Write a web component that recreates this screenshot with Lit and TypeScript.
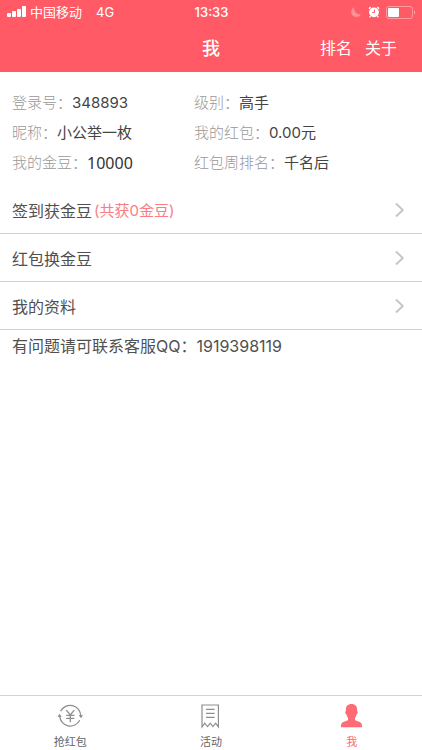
import { LitElement, html, svg, css } from "lit";
import { customElement, state } from "lit/decorators.js";

interface Field {
  label: string;
  value: string;
  large?: boolean;
}

const FIELDS: Field[] = [
  { label: "登录号", value: "348893" },
  { label: "级别", value: "高手" },
  { label: "昵称", value: "小公举一枚" },
  { label: "我的红包", value: "0.00元" },
  { label: "我的金豆", value: "10000", large: true },
  { label: "红包周排名", value: "千名后" },
];

const ROWS = [
  { text: "签到获金豆", note: "(共获0金豆)" },
  { text: "红包换金豆", note: "" },
  { text: "我的资料", note: "" },
];

const redPacketIcon = svg`
  <g fill="none" stroke="currentColor" stroke-width="1.3">
    <path d="M3.6 8.2A10.6 10.6 0 0 1 23.700 13M22.700 17.300A10.6 10.6 0 0 1 2.700 13" />
    <path d="M9.300 7.200l4 4.800 4-4.800M13.300 12v7.300M9.200 12.300h8.200M9.200 15.300h8.200" />
  </g>
  <path fill="currentColor" d="M21.700 12.300l4.200-.4-1.800 3.400zM.6 14.100l4.200-.4-2.400-3z" />`;

const activityIcon = svg`
  <g fill="none" stroke="currentColor" stroke-width="1.2">
    <path d="M5 23.900V2h16.400v21.900l-2.800-3.700-2.700 3.400-2.700-3.400-2.700 3.400-2.700-3.400z" />
    <path d="M9 6.300h8.600M9 10.300h8.600M9 14.300h8.600" />
  </g>`;

const meIcon = svg`
  <path fill="currentColor" d="M13.500 1c3.700 0 5.600 2.200 5.600 5.600v1.700c.6.1.7.8.5 1.700-.2.900-.5 1.400-1.100 1.600-.3 1.400-.8 2.500-1.500 3.300v1.800c.5 1 1.900 1.300 3.700 1.900 2.200.7 3.400 2 3.400 5.600H2.900c0-3.600 1.200-4.900 3.400-5.600 1.800-.6 3.200-.9 3.700-1.900v-1.800c-.7-.8-1.200-1.900-1.500-3.300-.6-.2-.9-.7-1.100-1.600-.2-.9-.1-1.600.5-1.700V6.600C7.900 3.200 9.800 1 13.500 1z" />`;

const TABS = [
  { id: "grab", text: "抢红包", icon: redPacketIcon },
  { id: "activity", text: "活动", icon: activityIcon },
  { id: "me", text: "我", icon: meIcon },
];

@customElement("status-bar")
export class StatusBar extends LitElement {
  static styles = css`
    :host {
      display: grid;
      grid-template-columns: 1fr auto 1fr;
      align-items: center;
      height: 24px;
      padding: 0 6px 0 7px;
      font-size: 13px;
      line-height: 24px;
    }
    .side {
      display: flex;
      align-items: center;
    }
    .signal {
      width: 19px;
      height: 12px;
      margin-right: 4px;
    }
    .network {
      margin-left: 14px;
    }
    .time {
      font-weight: 500;
    }
    .right {
      justify-content: flex-end;
      gap: 6px;
    }
    .moon,
    .alarm {
      width: 12px;
      height: 12px;
    }
    .battery {
      width: 30px;
      height: 13px;
    }
  `;

  render() {
    return html`
      <div class="side">
        <svg class="signal" viewBox="0 0 19 12" fill="#fff" aria-hidden="true">
          <rect x="0" y="7" width="4" height="4" rx="1" />
          <rect x="5" y="5" width="4" height="6" rx="1" />
          <rect x="10" y="3" width="4" height="8" rx="1" />
          <rect x="15" y="0" width="4" height="11" rx="1" />
        </svg>
        <span>中国移动</span>
        <span class="network">4G</span>
      </div>
      <span class="time">13:33</span>
      <div class="side right">
        <svg class="moon" viewBox="0 0 12 12" aria-hidden="true">
          <path fill="#ff9298" d="M4.500 1A5.200 5.200 0 1 0 11 8.200 5.600 5.600 0 0 1 4.500 1z" />
        </svg>
        <svg class="alarm" viewBox="0 0 12 12" aria-hidden="true">
          <circle cx="6" cy="6.300" r="4.900" fill="#fff" />
          <path d="M.9 2.800L2.700 1M11.100 2.800L9.300 1M2.500 10l-.8 1.300M9.500 10l.8 1.300" stroke="#fff" stroke-width="1.300" />
          <path d="M6.500 3.600v3H4.200" fill="none" stroke="#ff5a65" stroke-width="1" />
        </svg>
        <svg class="battery" viewBox="0 0 30 13" aria-hidden="true">
          <rect x=".5" y=".5" width="26" height="12" rx="2.500" fill="none" stroke="#ff9aa0" />
          <rect x="2" y="2" width="11" height="9" rx="1" fill="#fff" />
          <path d="M28 4.500c1.600.6 1.600 3.400 0 4z" fill="#ffa4a9" />
        </svg>
      </div>
    `;
  }
}

@customElement("app-root")
export class AppRoot extends LitElement {
  @state() private active = "me";

  static styles = css`
    :host {
      display: flex;
      flex-direction: column;
      min-height: 100vh;
      background: #fff;
      color: #505050;
      font-family: Inter, "Noto Sans CJK SC", sans-serif;
      font-size: 16px;
    }
    .top {
      background: #ff5a65;
      color: #fff;
    }
    .nav {
      display: grid;
      grid-template-columns: 1fr auto 1fr;
      align-items: center;
      height: 46px;
      padding: 0 25px 2px;
    }
    .title {
      grid-column: 2;
      margin: 0;
      font-size: 18px;
      font-weight: 500;
    }
    .links {
      display: flex;
      justify-content: flex-end;
      gap: 13px;
    }
    .link {
      color: inherit;
      text-decoration: none;
    }
    .content {
      flex: 1;
    }
    .info {
      display: grid;
      grid-template-columns: 1fr 1fr;
      margin: 0;
      padding: 16px 46px 8px 12px;
      font-size: 15px;
      font-weight: 300;
      line-height: 30px;
    }
    .field {
      display: flex;
      height: 30px;
      white-space: nowrap;
    }
    .label {
      color: #999;
    }
    .value {
      margin: 0;
      color: #444;
      font-weight: 400;
    }
    .large {
      font-family: "Noto Sans", sans-serif;
      font-size: 16px;
      color: #333;
    }
    .list {
      margin: 0;
      padding: 0;
      list-style: none;
    }
    .row {
      box-sizing: border-box;
      display: flex;
      align-items: center;
      width: 100%;
      height: 48px;
      padding: 0 16px 0 12px;
      border: 0;
      border-bottom: 1px solid #d2d2d2;
      background: none;
      color: inherit;
      font: inherit;
      text-align: left;
    }
    .note {
      margin-left: 2px;
      color: #fb7d83;
      font-size: 15px;
    }
    .chevron {
      width: 12px;
      height: 16px;
      margin-left: auto;
    }
    .contact {
      margin: 0;
      padding: 4px 12px;
      line-height: 24px;
    }
    .tabs {
      display: grid;
      grid-template-columns: repeat(3, 1fr);
      height: 54px;
      border-top: 1px solid #d2d2d2;
    }
    .tab {
      display: flex;
      flex-direction: column;
      align-items: center;
      gap: 4px;
      padding: 7px 0 0;
      border: 0;
      background: none;
      color: #8e8e8e;
      font: inherit;
      font-size: 11px;
      line-height: 16px;
    }
    .caption {
      color: #666;
    }
    .active,
    .active .caption {
      color: #fe6b75;
    }
    .icon {
      flex: none;
      width: 27px;
      height: 27px;
    }
  `;

  render() {
    return html`
      <header class="top">
        <status-bar></status-bar>
        <div class="nav">
          <h1 class="title">我</h1>
          <nav class="links">
            <a class="link" href="#rank">排名</a>
            <a class="link" href="#about">关于</a>
          </nav>
        </div>
      </header>
      <main class="content">
        <dl class="info">
          ${FIELDS.map(
            (f) => html`<div class="field">
              <dt class="label">${f.label}：</dt>
              <dd class="value ${f.large ? "large" : ""}">${f.value}</dd>
            </div>`
          )}
        </dl>
        <ul class="list">
          ${ROWS.map(
            (r) => html`<li>
              <button class="row" type="button">
                <span>${r.text}</span>
                ${r.note ? html`<span class="note">${r.note}</span>` : ""}
                <svg class="chevron" viewBox="0 0 12 16" aria-hidden="true">
                  <path d="M2 1.500L8.800 8 2 14.500" fill="none" stroke="#c4c4c6" stroke-width="1.800" />
                </svg>
              </button>
            </li>`
          )}
        </ul>
        <p class="contact">有问题请可联系客服QQ：1919398119</p>
      </main>
      <nav class="tabs">
        ${TABS.map(
          (t) => html`<button
            class="tab ${t.id === this.active ? "active" : ""}"
            type="button"
            @click=${() => (this.active = t.id)}
          >
            <svg class="icon" viewBox="0 0 27 27" aria-hidden="true">${t.icon}</svg>
            <span class="caption">${t.text}</span>
          </button>`
        )}
      </nav>
    `;
  }
}
